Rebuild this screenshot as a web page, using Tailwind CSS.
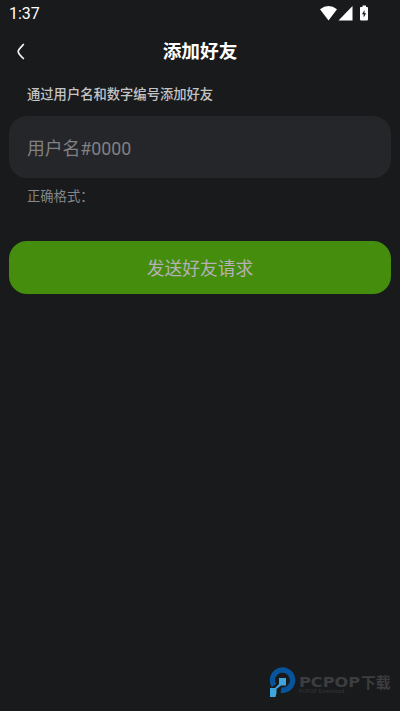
<!DOCTYPE html>
<html lang="zh-CN">
<head>
<meta charset="utf-8">
<meta name="viewport" content="width=device-width, initial-scale=1">
<title>添加好友</title>
<script src="https://cdn.jsdelivr.net/npm/@tailwindcss/browser@4"></script>
</head>
<body class="bg-[#191a1c] font-[Roboto,'Noto_Sans_CJK_SC',sans-serif]">
<div class="flex h-[711px] w-[400px] flex-col overflow-hidden bg-[#191a1c]">
  <div class="flex h-7 shrink-0 items-center justify-between pl-[9px] pr-[30px]">
    <span class="text-base leading-7 font-normal text-white">1:37</span>
    <svg class="h-7 w-[51px]" viewBox="0 0 51 28" fill="#fff">
      <path d="M1 9.200Q9.500 2.600 18 9.200L9.500 20.400Z"/>
      <path d="M33.500 6V20.400H19.500Z"/>
      <path d="M43.500 5.500H47V7H48.200Q49 7 49 7.800V19.600Q49 20.400 48.200 20.400H41.800Q41 20.400 41 19.600V7.800Q41 7 41.800 7H43.500Z"/>
      <path d="M45.500 10L43 14.200H44.600V17.600L47.200 13.300H45.500Z" fill="#191a1c"/>
    </svg>
  </div>
  <header class="grid h-[46px] shrink-0 grid-cols-[40px_1fr_40px] items-center">
    <svg class="h-5 w-10" viewBox="0 0 40 20" fill="none" stroke="#f5f5f5" stroke-width="1.700" stroke-linecap="round" stroke-linejoin="round"><path d="M23.400 3.500C21.800 5.200 18.200 8.600 18.200 10.500C18.200 12.300 21.600 15.800 23.400 17.500"/></svg>
    <h1 class="pt-[3px] text-center text-[18.700px] leading-[43px] font-bold text-white">添加好友</h1>
  </header>
  <main class="flex flex-col px-[9px] pt-[11px]">
    <label class="pl-[18px] text-[13.300px] leading-5 font-medium text-[#c3c4c5]">通过用户名和数字编号添加好友</label>
    <div class="mt-[11px] flex h-[62px] items-center rounded-[18px] bg-[#25262a] pt-[3px] pl-[18px] text-[17.800px] leading-6 text-[#808182]">用户名#0000</div>
    <p class="mt-[9px] pl-[18px] text-[13.300px] leading-5 text-[#858687]">正确格式：</p>
    <button class="mt-[33.500px] flex h-[53.500px] items-center justify-center rounded-[18px] bg-[#458e0d] pt-[3px] text-[17.800px] leading-6 text-[#b5b0b7]">发送好友请求</button>
  </main>
  <footer class="mt-auto mb-[13px] flex h-[31px] items-start pl-[269px]">
    <svg class="h-[31px] w-[29px] shrink-0" viewBox="0 0 29 31">
      <path d="M5 18.500A10.100 10.100 0 1 1 12 23.100" fill="none" stroke="#07549b" stroke-width="5.300"/>
      <path d="M10 11H17V18.500H12L7.500 22V26L6.500 30H1V21H6L10 17Z" fill="#3fa5dd"/>
    </svg>
    <svg class="h-[31px] w-[94px] shrink-0" viewBox="0 0 94 31">
      <text x="1" y="19.500" fill="#3c3d3f" class="font-['DejaVu_Sans'] text-[14.500px] font-bold" textLength="61" lengthAdjust="spacingAndGlyphs">PCPOP</text>
      <text x="63" y="20.500" fill="#3c3d3f" class="font-['Noto_Sans_CJK_SC'] text-[14.800px] font-bold">下载</text>
      <text x="1" y="26.300" fill="#38393b" class="text-[5px]" textLength="45" lengthAdjust="spacing">PCPOP Download</text>
    </svg>
  </footer>
</div>
</body>
</html>
